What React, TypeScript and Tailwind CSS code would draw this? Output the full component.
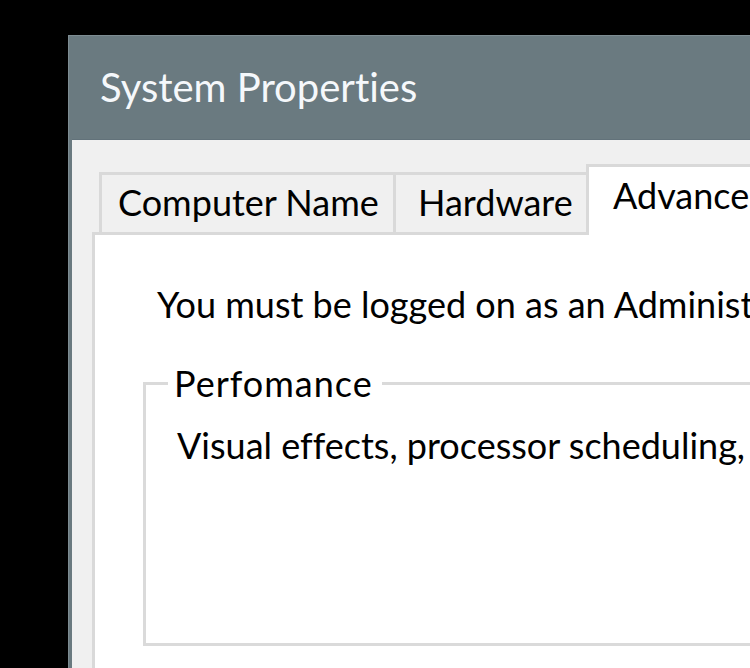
import React from "react";

const font = { fontFamily: 'Lato, "Open Sans", sans-serif' };

const txt = "text-[36px] leading-[48px] text-black [font-variant-ligatures:none]";

export default function App() {
  return (
    <div className="w-[750px] h-[668px] bg-black overflow-hidden pt-[35px] pl-[68px]" style={font}>
      <div className="w-[720px] h-[700px] flex flex-col border-t border-l border-[#7d8c92]">
        <div className="flex flex-col flex-1 border-l-[3px] border-[#6a7a80] bg-[#f0f0f0]">
          <div className="h-[104px] shrink-0 bg-[#6a7a80] border-b border-[#62727a] pl-[28px] pt-[27px]">
            <div className="text-[40px] leading-[48px] text-[#f5f8fb] whitespace-nowrap [font-variant-ligatures:none]">System Properties</div>
          </div>
          <div className="flex flex-col pl-[20px] pt-[24px]">
            <div className="flex items-end ml-[7px]">
              <div className="shrink-0 w-[297px] h-[60px] border-t-[3px] border-l-[3px] border-r-[3px] border-[#d9d9d9] bg-[#f0f0f0] pt-[3px] pl-[16px]">
                <span className={`${txt} whitespace-nowrap`}>Computer Name</span>
              </div>
              <div className="shrink-0 w-[190px] h-[60px] border-t-[3px] border-[#d9d9d9] bg-[#f0f0f0] pt-[3px] pl-[22px]">
                <span className={`${txt} whitespace-nowrap`}>Hardware</span>
              </div>
              <div className="shrink-0 relative z-10 w-[220px] h-[71px] -mb-[3px] border-t-[3px] border-l-[3px] border-[#d9d9d9] bg-white pt-[4px] pl-[24px]">
                <span className={`${txt} whitespace-nowrap`}>Advanced</span>
              </div>
            </div>
            <div className="w-[720px] h-[500px] bg-white border-t-[3px] border-l-[3px] border-[#d9d9d9] pl-[48px] pt-[45px]">
              <div className={`ml-[14px] ${txt} whitespace-nowrap`}>
                You must be logged on as an Administrator to make most of these changes.
              </div>
              <fieldset className="mt-[31px] w-[700px] border-[3px] border-[#dadada] pl-[22px] pb-[174px]">
                <legend className={`pl-[6px] pr-[9px] ${txt} tracking-[1px]`}>Perfomance</legend>
                <div className={`pt-[14px] pl-[9px] ${txt} whitespace-nowrap`}>
                  Visual effects, processor scheduling, memory usage, and virtual memory
                </div>
              </fieldset>
            </div>
          </div>
        </div>
      </div>
    </div>
  );
}
